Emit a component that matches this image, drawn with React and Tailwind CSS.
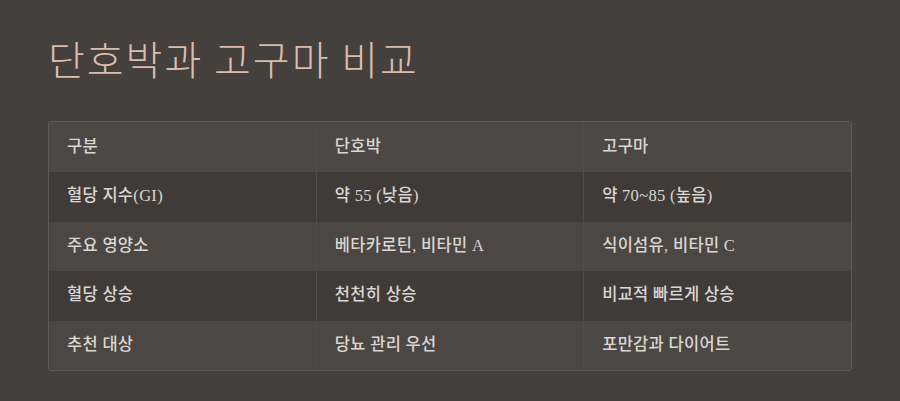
import React from "react";

const rows = [
  ["혈당 지수(GI)", "약 55 (낮음)", "약 70~85 (높음)"],
  ["주요 영양소", "베타카로틴, 비타민 A", "식이섬유, 비타민 C"],
  ["혈당 상승", "천천히 상승", "비교적 빠르게 상승"],
  ["추천 대상", "당뇨 관리 우선", "포만감과 다이어트"],
];

export default function App() {
  return (
    <div className="w-[900px] h-[401px] bg-[#43403d] px-12 pt-[32px] font-['Liberation_Serif','Noto_Sans_CJK_KR',serif]">
      <h1 className="text-[40px] leading-[52px] font-light tracking-[2px] text-[#dcbba8] font-['Noto_Sans_CJK_KR',sans-serif]">
        단호박과 고구마 비교
      </h1>
      <div className="mt-[37px] border border-[#5e5a57] rounded-[3px] overflow-hidden">
        <table className="w-full border-collapse text-[16.5px] tracking-[0.3px] font-medium text-[#dbd6d1]">
          <thead>
            <tr className="bg-[#4b4845] h-[50px]">
              <th className="w-1/3 text-left font-medium pl-[18px] border-r border-[#4f4c49]">구분</th>
              <th className="w-1/3 text-left font-medium pl-[18px] border-r border-[#4f4c49]">단호박</th>
              <th className="w-1/3 text-left font-medium pl-[18px]">고구마</th>
            </tr>
          </thead>
          <tbody>
            {rows.map((r, i) => (
              <tr key={i} className={i % 2 === 0 ? "bg-[#3e3b39] h-[49.5px]" : "bg-[#4a4744] h-[49.5px]"}>
                {r.map((c, j) => (
                  <td key={j} className={j < 2 ? "pl-[18px] border-r border-[#4f4c49]" : "pl-[18px]"}>
                    {c}
                  </td>
                ))}
              </tr>
            ))}
          </tbody>
        </table>
      </div>
    </div>
  );
}
